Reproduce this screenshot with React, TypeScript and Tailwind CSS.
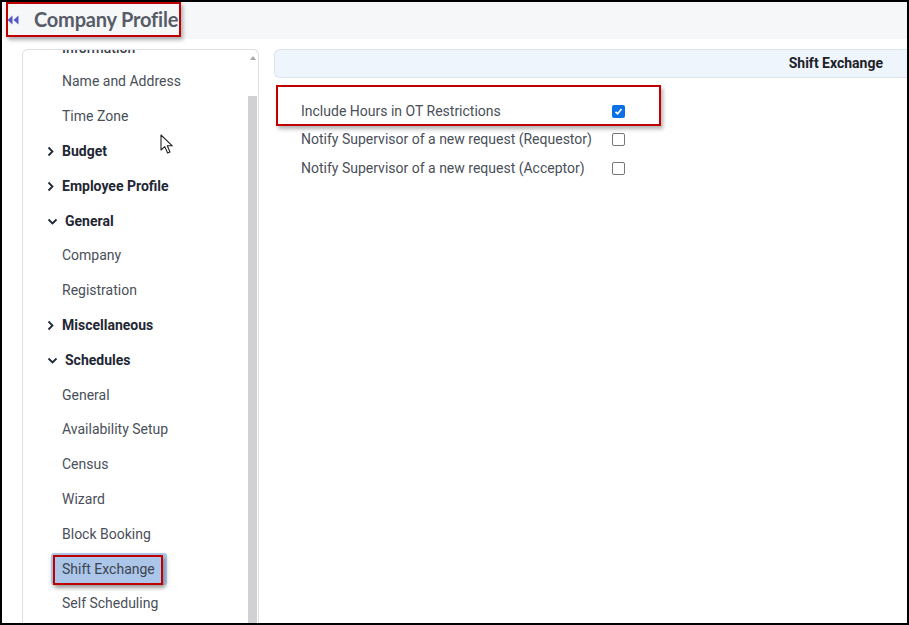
import { ReactNode } from "react"

function ChevronRight() {
  return (
    <svg width="7" height="11" viewBox="0 0 7 11" className="shrink-0">
      <path d="M1.5 1.5 L5.5 5.5 L1.5 9.5" fill="none" stroke="#1f2937" strokeWidth="1.8" />
    </svg>
  )
}

function ChevronDown() {
  return (
    <svg width="11" height="7" viewBox="0 0 11 7" className="shrink-0">
      <path d="M1.5 1.5 L5.5 5.5 L9.5 1.5" fill="none" stroke="#1f2937" strokeWidth="1.8" />
    </svg>
  )
}

function Row({ children }: { children: ReactNode }) {
  return <div className="h-[34.8px] flex items-center">{children}</div>
}

function Child({ label }: { label: string }) {
  return (
    <Row>
      <span className="pl-[39px] text-[14px] text-[#4a4f59]">{label}</span>
    </Row>
  )
}

function Section({ label, open }: { label: string; open?: boolean }) {
  return (
    <Row>
      <div className="pl-[24px] flex items-center">
        {open ? (
          <>
            <ChevronDown />
            <span className="ml-[7px] text-[14px] font-bold text-[#1f2733]">{label}</span>
          </>
        ) : (
          <>
            <ChevronRight />
            <span className="ml-[8px] text-[14px] font-bold text-[#1f2733]">{label}</span>
          </>
        )}
      </div>
    </Row>
  )
}

function Checkbox({ checked }: { checked?: boolean }) {
  if (checked) {
    return (
      <div className="w-[13px] h-[13px] rounded-[2px] bg-[#0b6fe6] flex items-center justify-center">
        <svg width="9" height="9" viewBox="0 0 9 9">
          <path d="M1.5 4.8 L3.6 6.8 L7.5 2" fill="none" stroke="white" strokeWidth="1.7" />
        </svg>
      </div>
    )
  }
  return <div className="w-[13px] h-[13px] rounded-[2px] border border-[#767676] bg-white" />
}

export default function App() {
  return (
    <div
      className="relative w-[909px] h-[625px] border-2 border-black bg-white overflow-hidden flex flex-col"
      style={{ fontFamily: "Roboto, 'Liberation Sans', sans-serif" }}
    >
      {/* HEADER */}
      <div className="h-[37px] shrink-0 bg-[#f6f7f9] flex items-center pl-[5px]">
        <svg width="12" height="10" viewBox="0 0 12 10" className="mt-[-2px]">
          <path d="M5.5 0.5 L0.5 5 L5.5 9.5 Z" fill="#5257cf" />
          <path d="M11.5 0.5 L6.5 5 L11.5 9.5 Z" fill="#5257cf" />
        </svg>
        <span
          className="ml-[15px] mt-[-3px] text-[20px] font-bold text-[#575c68] tracking-[-0.2px]"
          style={{ fontFamily: "Lato, 'Open Sans', sans-serif" }}
        >
          Company Profile
        </span>
      </div>

      {/* title annotation */}
      <div className="absolute left-[4px] top-0 w-[175px] h-[35px] border-2 border-[#c00000] shadow-[2px_3px_4px_rgba(0,0,0,0.3)]" />

      <div className="flex flex-1 min-h-0 pt-[10px]">
        {/* SIDEBAR */}
        <div className="ml-[20px] w-[237px] shrink-0 border border-b-0 border-[#dcdfe3] rounded-t-md flex overflow-hidden">
          <div className="flex-1 overflow-hidden">
            <div className="h-[14.6px] overflow-hidden">
              <div className="-mt-[10px] pl-[39px] leading-[16px] text-[14px] font-medium text-[#3a3f48]">
                Information
              </div>
            </div>
            <Child label="Name and Address" />
            <Child label="Time Zone" />
            <Section label="Budget" />
            <Section label="Employee Profile" />
            <Section label="General" open />
            <Child label="Company" />
            <Child label="Registration" />
            <Section label="Miscellaneous" />
            <Section label="Schedules" open />
            <Child label="General" />
            <Child label="Availability Setup" />
            <Child label="Census" />
            <Child label="Wizard" />
            <Child label="Block Booking" />
            <Row>
              <div className="relative ml-[28px] h-[32px] w-[116px] rounded-[3px] bg-[#abc6e8] flex items-center pl-[11px] shadow-[0_2px_4px_rgba(0,0,0,0.15)]">
                <span className="text-[14px] text-[#3d4450]">Shift Exchange</span>
                <div className="absolute left-[2px] top-[2px] w-[110px] h-[30px] border-2 border-[#c00000] shadow-[2px_3px_4px_rgba(0,0,0,0.3)]" />
              </div>
            </Row>
            <Child label="Self Scheduling" />
          </div>
          {/* scrollbar */}
          <div className="w-[10px] shrink-0 flex flex-col">
            <div className="h-[14px] flex items-center justify-center pr-[1px] pt-[1px]">
              <svg width="6" height="4" viewBox="0 0 6 4">
                <path d="M3 0 L6 4 L0 4 Z" fill="#a8a8a8" />
              </svg>
            </div>
            <div className="mt-[32px] flex-1 w-[9px] bg-[#d1d0d2]" />
          </div>
        </div>

        {/* CONTENT */}
        <div className="relative flex-1 ml-[15px]">
          <div className="h-[29px] -mr-[4px] bg-[#eef5fd] border border-r-0 border-[#dbe3ec] rounded-l-md flex items-center justify-end pr-[28px]">
            <span className="text-[14px] font-bold text-[#1f2328]">Shift Exchange</span>
          </div>

          <div className="mt-[19px] pl-[27px]">
            {[
              { label: "Include Hours in OT Restrictions", checked: true },
              { label: "Notify Supervisor of a new request (Requestor)" },
              { label: "Notify Supervisor of a new request (Acceptor)" },
            ].map((r) => (
              <div key={r.label} className="h-[28.5px] flex items-center">
                <span className="w-[311px] text-[14px] text-[#4a4f59]">{r.label}</span>
                <Checkbox checked={r.checked} />
              </div>
            ))}
          </div>

          {/* row annotation */}
          <div className="absolute left-[2px] top-[36px] w-[385px] h-[41px] border-2 border-[#c00000] shadow-[2px_3px_4px_rgba(0,0,0,0.3)]" />
        </div>
      </div>

      {/* mouse pointer */}
      <svg className="absolute left-[158px] top-[132px]" width="14" height="21" viewBox="0 0 14 21">
        <path
          d="M1 1 L1 16 L4.8 12.6 L7.6 19 L10 18 L7.3 11.8 L12.3 11.8 Z"
          fill="white"
          stroke="#222"
          strokeWidth="1.1"
          strokeLinejoin="round"
        />
      </svg>
    </div>
  )
}
